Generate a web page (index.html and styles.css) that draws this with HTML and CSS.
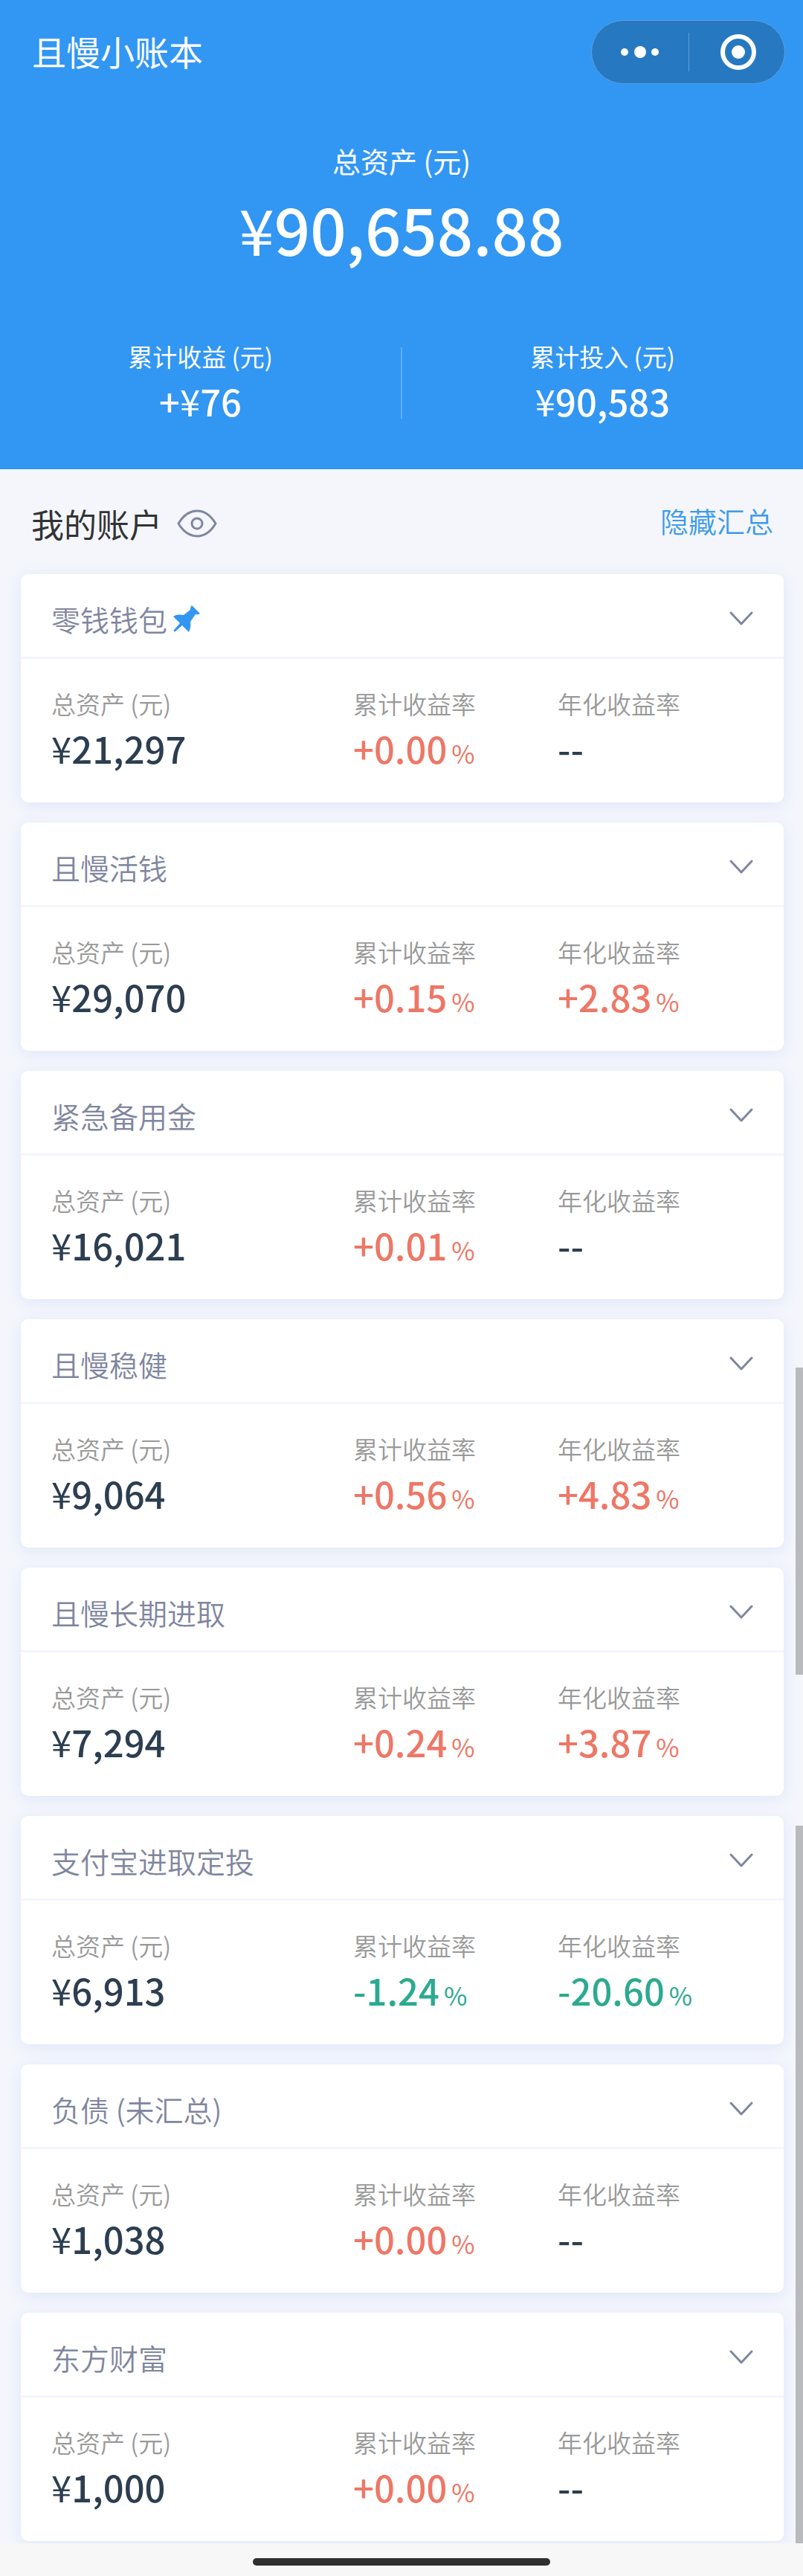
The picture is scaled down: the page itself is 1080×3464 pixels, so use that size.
FILE: index.html
```html
<!DOCTYPE html>
<html lang="zh-CN">
<head>
<meta charset="utf-8">
<meta name="viewport" content="width=device-width, initial-scale=1">
<title>且慢小账本</title>
<link rel="stylesheet" href="styles.css">
</head>
<body>
<svg class="sprite" aria-hidden="true">
  <symbol id="chevron" viewBox="0 0 34 20"><path d="M3 2 17 17 31 2" fill="none" stroke="currentColor" stroke-width="3" stroke-linecap="round" stroke-linejoin="round"/></symbol>
</svg>
<div class="page">
  <header class="hero">
    <div class="navbar">
      <h1 class="navbar-title">且慢小账本</h1>
      <div class="capsule">
        <button class="capsule-btn" type="button" aria-label="更多">
          <svg width="52" height="20" viewBox="0 0 52 20" fill="#fff"><circle cx="5" cy="10" r="5"/><circle cx="26" cy="10" r="8"/><circle cx="46" cy="10" r="5"/></svg>
        </button>
        <button class="capsule-btn" type="button" aria-label="关闭">
          <svg width="48" height="48" viewBox="0 0 48 48"><circle cx="24" cy="24" r="21" fill="none" stroke="#fff" stroke-width="6"/><circle cx="24" cy="24" r="9" fill="#fff"/></svg>
        </button>
      </div>
    </div>
    <div class="total">
      <div class="total-label">总资产 (元)</div>
      <div class="total-value"><span class="yen">¥</span>90,658.88</div>
    </div>
    <div class="summary">
      <div><div class="label">累计收益 (元)</div><div class="value">+<span class="yen">¥</span>76</div></div>
      <div class="summary-divider"></div>
      <div><div class="label">累计投入 (元)</div><div class="value"><span class="yen">¥</span>90,583</div></div>
    </div>
  </header>
  <main class="accounts">
    <div class="accounts-head">
      <h2 class="accounts-title">我的账户</h2>
      <button class="eye" type="button" aria-label="隐藏金额">
        <svg width="54" height="38" viewBox="0 0 54 38" fill="none" stroke="#7f86a0" stroke-width="3"><path d="M2 19C8 9 16 2 27 2s19 7 25 17C46 29 38 36 27 36S8 29 2 19Z" stroke-linejoin="round"/><circle cx="27" cy="19" r="7"/></svg>
      </button>
      <a class="toggle" href="#">隐藏汇总</a>
    </div>
    <div class="cards" id="cards"></div>
  </main>
  <div class="scroll-thumb scroll-thumb-upper"></div>
  <div class="scroll-thumb scroll-thumb-lower"></div>
</div>
<footer class="home-bar"><div class="home-indicator"></div></footer>
<script src="accounts.js"></script>
</body>
</html>
```
FILE: accounts.js
```js
const accounts = [
  { name: '零钱钱包', pinned: true, total: '21,297', gain: '+0.00', annual: null },
  { name: '且慢活钱', total: '29,070', gain: '+0.15', annual: '+2.83' },
  { name: '紧急备用金', total: '16,021', gain: '+0.01', annual: null },
  { name: '且慢稳健', total: '9,064', gain: '+0.56', annual: '+4.83' },
  { name: '且慢长期进取', total: '7,294', gain: '+0.24', annual: '+3.87' },
  { name: '支付宝进取定投', total: '6,913', gain: '-1.24', annual: '-20.60' },
  { name: '负债 (未汇总)', total: '1,038', gain: '+0.00', annual: null },
  { name: '东方财富', total: '1,000', gain: '+0.00', annual: null }
];

const pin = '<svg class="pin" width="36" height="36" viewBox="0 0 36 36" fill="#3296f3"><path d="M25 0 36 11C34 13 31 12 30 12L23 22C24 27 23 32 21 36L12 27 3 35C1 36 0 35 1 33L9 24 0 15C4 12 9 12 14 13L23 6C23 4 23 2 25 0Z"/></svg>';

function rate(value) {
  if (value === null) return '<div class="value">--</div>';
  const tone = value.startsWith('-') ? 'down' : 'up';
  return `<div class="value ${tone}">${value}<span class="percent">%</span></div>`;
}

document.getElementById('cards').innerHTML = accounts.map(a => `
  <section class="card">
    <div class="card-head">
      <h3 class="card-title">${a.name}</h3>${a.pinned ? pin : ''}
      <button class="expand" type="button" aria-label="展开${a.name}"><svg width="34" height="20"><use href="#chevron"/></svg></button>
    </div>
    <div class="card-body">
      <div><div class="label">总资产 (元)</div><div class="value"><span class="yen">¥</span>${a.total}</div></div>
      <div><div class="label">累计收益率</div>${rate(a.gain)}</div>
      <div><div class="label">年化收益率</div>${rate(a.annual)}</div>
    </div>
  </section>`).join('');
```
FILE: styles.css
```css
* { box-sizing: border-box; }
body {
  margin: 0;
  background: #f4f6fc;
  color: #2c3e50;
  font-family: "Noto Sans CJK SC", sans-serif;
  font-weight: 400;
}
h1, h2, h3 { margin: 0; font-weight: 400; }
button { padding: 0; border: 0; background: none; color: inherit; cursor: pointer; }
svg { display: block; }
.sprite { position: absolute; width: 0; height: 0; }
.page { position: relative; overflow: hidden; padding-bottom: 3px; }

.hero { background: #3296f3; color: #fff; padding-bottom: 56px; }
.navbar {
  display: flex;
  align-items: center;
  justify-content: space-between;
  height: 140px;
  padding: 0 24px 0 43px;
}
.navbar-title { padding-bottom: 4px; font-size: 46px; line-height: 60px; }
.capsule {
  display: grid;
  grid-template-columns: 1fr 1fr;
  width: 261px;
  height: 86px;
  border: 1px solid #5aa0dc;
  border-radius: 43px;
  background: #2679c1;
}
.capsule-btn { display: flex; align-items: center; justify-content: center; margin: 16px 0; }
.capsule-btn + .capsule-btn { border-left: 1px solid #5aa0dc; padding-left: 4px; }

.total { padding-top: 48px; text-align: center; }
.total-label { font-size: 38px; line-height: 56px; }
.total-value { font-size: 85px; line-height: 126px; font-weight: 500; }
.summary {
  display: grid;
  grid-template-columns: 1fr 2px 1fr;
  align-items: center;
  margin-top: 85px;
  text-align: center;
}
.summary-divider { height: 96px; background: #5fadf6; }

.label { font-size: 33px; line-height: 48px; }
.value { font-size: 49px; line-height: 72px; font-weight: 500; }
.yen { font-weight: 400; }

.accounts { padding: 0 26px 0 28px; }
.accounts-head { display: flex; align-items: center; height: 141px; padding: 5px 14px 0; }
.accounts-title { font-size: 44px; line-height: 60px; color: #333; }
.eye { margin-left: 20px; }
.toggle {
  margin: 0 0 8px auto;
  font-size: 38px;
  line-height: 60px;
  font-weight: 350;
  color: #3d9be9;
  text-decoration: none;
}

.cards { display: grid; gap: 27px; }
.card { background: #fff; border-radius: 10px; box-shadow: 0 4px 20px #dde6f8; }
.card-head {
  display: flex;
  align-items: center;
  height: 114px;
  padding: 8px 40px 0 41px;
  border-bottom: 3px solid #f4f6fc;
}
.card-title { font-size: 39px; line-height: 60px; font-weight: 350; color: #7f86a0; }
.pin { margin-left: 8px; }
.expand { margin-left: auto; color: #7f86a0; }
.card-body { display: grid; grid-template-columns: 406fr 275fr 264fr; height: 193px; padding: 36px 40px 0 41px; }
.card-body .label { font-weight: 350; color: #999; }
.up { color: #ee7766; }
.down { color: #2caa8f; }
.percent { margin-left: 6px; font-size: 34px; font-weight: 400; }

.scroll-thumb { position: absolute; right: 0; width: 10px; background: #b9babe; }
.scroll-thumb-upper { top: 1839px; height: 413px; }
.scroll-thumb-lower { top: 2455px; bottom: 0; }

.home-bar { display: flex; align-items: center; justify-content: center; height: 44px; padding-top: 6px; background: #f7f7f7; }
.home-indicator { width: 37%; height: 10px; border-radius: 5px; background: #2f2f2f; }
```
